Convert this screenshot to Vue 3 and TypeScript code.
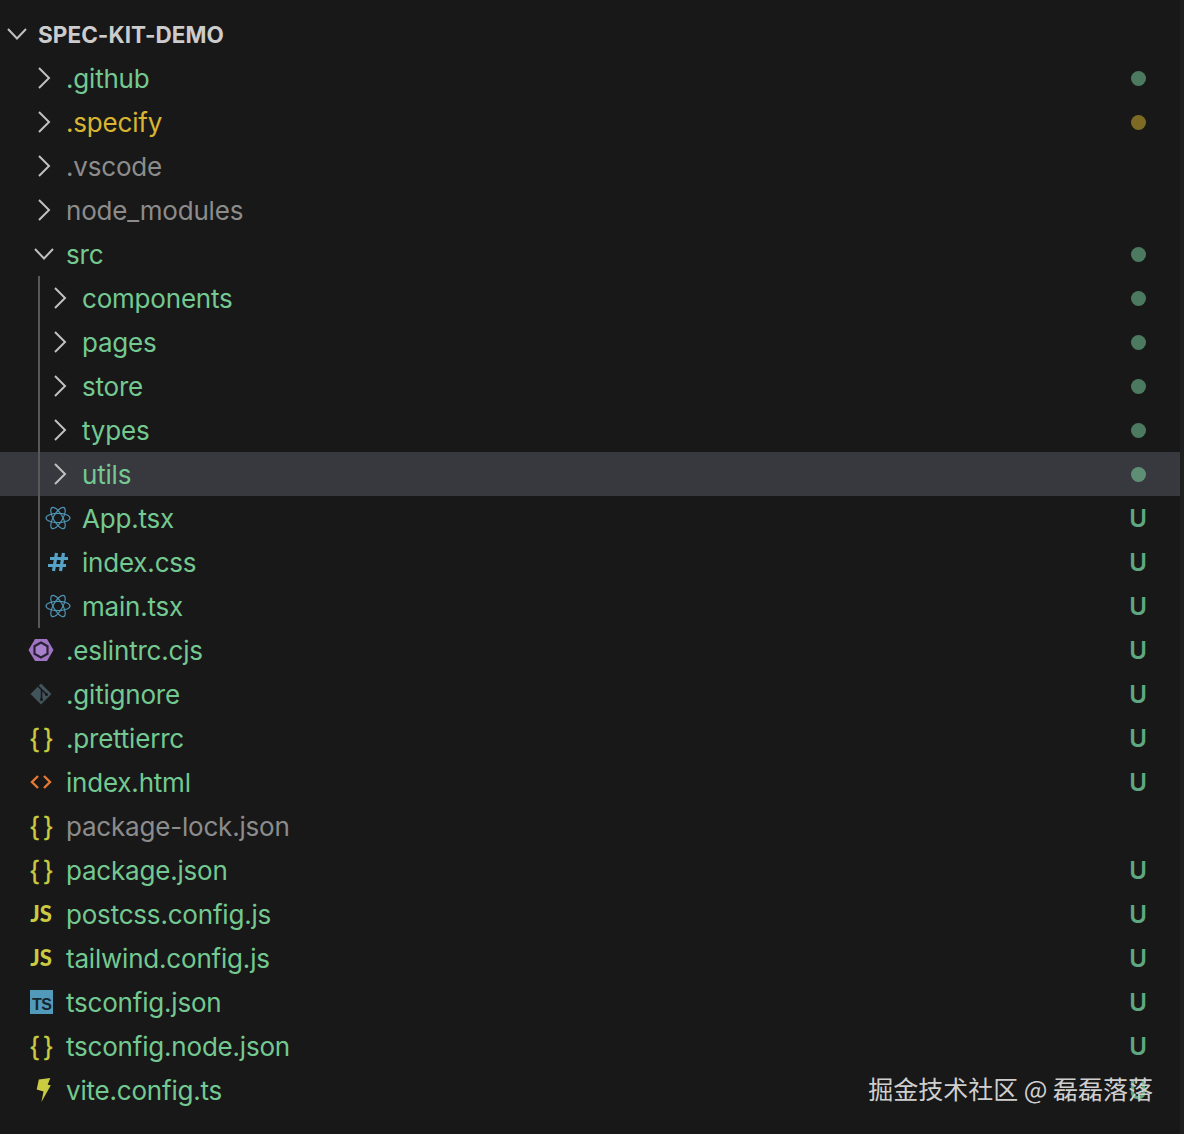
<script setup lang="ts">
type Tone = 'green' | 'yellow' | 'grey'
type Icon = 'closed' | 'open' | 'react' | 'css' | 'eslint' | 'git' | 'braces' | 'html' | 'js' | 'ts' | 'vite'
interface Row {
  name: string
  icon: Icon
  tone: Tone
  badge?: 'dot' | 'U'
  hover?: boolean
}

const before: Row[] = [
  { name: '.github', icon: 'closed', tone: 'green', badge: 'dot' },
  { name: '.specify', icon: 'closed', tone: 'yellow', badge: 'dot' },
  { name: '.vscode', icon: 'closed', tone: 'grey' },
  { name: 'node_modules', icon: 'closed', tone: 'grey' },
  { name: 'src', icon: 'open', tone: 'green', badge: 'dot' },
]
const nested: Row[] = [
  { name: 'components', icon: 'closed', tone: 'green', badge: 'dot' },
  { name: 'pages', icon: 'closed', tone: 'green', badge: 'dot' },
  { name: 'store', icon: 'closed', tone: 'green', badge: 'dot' },
  { name: 'types', icon: 'closed', tone: 'green', badge: 'dot' },
  { name: 'utils', icon: 'closed', tone: 'green', badge: 'dot', hover: true },
  { name: 'App.tsx', icon: 'react', tone: 'green', badge: 'U' },
  { name: 'index.css', icon: 'css', tone: 'green', badge: 'U' },
  { name: 'main.tsx', icon: 'react', tone: 'green', badge: 'U' },
]
const after: Row[] = [
  { name: '.eslintrc.cjs', icon: 'eslint', tone: 'green', badge: 'U' },
  { name: '.gitignore', icon: 'git', tone: 'green', badge: 'U' },
  { name: '.prettierrc', icon: 'braces', tone: 'green', badge: 'U' },
  { name: 'index.html', icon: 'html', tone: 'green', badge: 'U' },
  { name: 'package-lock.json', icon: 'braces', tone: 'grey' },
  { name: 'package.json', icon: 'braces', tone: 'green', badge: 'U' },
  { name: 'postcss.config.js', icon: 'js', tone: 'green', badge: 'U' },
  { name: 'tailwind.config.js', icon: 'js', tone: 'green', badge: 'U' },
  { name: 'tsconfig.json', icon: 'ts', tone: 'green', badge: 'U' },
  { name: 'tsconfig.node.json', icon: 'braces', tone: 'green', badge: 'U' },
  { name: 'vite.config.ts', icon: 'vite', tone: 'green', badge: 'U' },
]
const groups: { rows: Row[]; depth: number; guided: boolean }[] = [
  { rows: before, depth: 1, guided: false },
  { rows: nested, depth: 2, guided: true },
  { rows: after, depth: 1, guided: false },
]
</script>

<template>
  <div class="page">
    <div class="tree">
      <div class="row root">
        <span class="slot">
          <svg width="22" height="14" viewBox="0 0 22 14"><polyline class="chev" points="2,2 11,11.5 20,2" /></svg>
        </span>
        <span class="root-label">SPEC-KIT-DEMO</span>
      </div>

      <div v-for="(g, gi) in groups" :key="gi" class="group" :class="{ guided: g.guided }">
        <div
          v-for="r in g.rows"
          :key="r.name"
          class="row"
          :class="[`depth${g.depth}`, { hover: r.hover }]"
        >
          <span class="slot">
            <svg v-if="r.icon === 'closed'" class="closed" width="14" height="24" viewBox="0 0 14 24"><polyline class="chev" points="2,2 12,12 2,22" /></svg>
            <svg v-else-if="r.icon === 'open'" class="closed" width="22" height="14" viewBox="0 0 22 14"><polyline class="chev" points="2,2 11,11.5 20,2" /></svg>
            <svg v-else-if="r.icon === 'react'" class="ico-left" width="26" height="24" viewBox="0 0 26 24" fill="none" stroke="#4f93b3" stroke-width="1.2">
              <ellipse cx="13" cy="12" rx="12" ry="4.600" />
              <ellipse cx="13" cy="12" rx="12" ry="4.600" transform="rotate(60 13 12)" />
              <ellipse cx="13" cy="12" rx="12" ry="4.600" transform="rotate(120 13 12)" />
            </svg>
            <svg v-else-if="r.icon === 'css'" class="ico-left" width="20" height="20" viewBox="0 0 20 20" fill="none" stroke="#55a3c6" stroke-width="3.2">
              <path d="M8.500 1 5.500 19M15.500 1l-3 18M2 6.500h18M0 13.500h18" />
            </svg>
            <svg v-else-if="r.icon === 'eslint'" class="ico-outer" width="26" height="24" viewBox="0 0 26 24">
              <path d="M7 1h12l6.500 11L19 23H7L.5 12z" fill="#a074c4" />
              <path d="M13 4.500 19.500 8.250v7.500L13 19.500 6.500 15.750v-7.500z" fill="#a880cc" stroke="#2b2335" stroke-width="2.200" />
            </svg>
            <svg v-else-if="r.icon === 'git'" class="ico-outer" width="24" height="24" viewBox="0 0 24 24">
              <path d="M12 1.500 22.500 12 12 22.500 1.500 12z" fill="#41535b" />
              <path d="M9 4l8.500 8.500M12.500 7.500v10" fill="none" stroke="#181818" stroke-width="1.500" />
              <circle cx="17.500" cy="12.500" r="1.500" fill="#181818" />
              <circle cx="12.500" cy="17.500" r="1.500" fill="#181818" />
            </svg>
            <span v-else-if="r.icon === 'braces'" class="braces ico-outer">{ }</span>
            <svg v-else-if="r.icon === 'html'" class="ico-outer" width="22" height="16" viewBox="0 0 22 16" fill="none" stroke="#e37933" stroke-width="2.400">
              <polyline points="8,2 2,8 8,14" />
              <polyline points="14,2 20,8 14,14" />
            </svg>
            <span v-else-if="r.icon === 'js'" class="js ico-outer">JS</span>
            <span v-else-if="r.icon === 'ts'" class="ts ico-outer">TS</span>
            <svg v-else-if="r.icon === 'vite'" width="15" height="24" viewBox="0 0 14 23">
              <path d="M2.500 1.500 13.500 0l-2.500 6.500L14 7 5 23 7 13 .5 11z" fill="#cbcb41" />
            </svg>
          </span>
          <span class="label" :class="r.tone">{{ r.name }}</span>
          <span v-if="r.badge === 'dot'" class="badge"><i class="dot" :class="r.tone" /></span>
          <span v-else-if="r.badge === 'U'" class="badge u">U</span>
        </div>
      </div>
    </div>
    <div class="watermark">掘金技术社区 @ 磊磊落落</div>
  </div>
</template>

<style scoped>
.page {
  position: relative;
  height: 1134px;
  box-sizing: border-box;
  padding: 12px 4px 0 0;
  background: #181818;
  overflow: hidden;
  font-family: Inter, "Noto Sans", sans-serif;
  box-shadow: inset -4px 0 0 #1f1f1f;
}
.group {
  position: relative;
}
.guided::before {
  content: "";
  position: absolute;
  left: 38px;
  top: 0;
  bottom: 0;
  width: 2px;
  background: #585858;
  z-index: 1;
}
.row {
  display: flex;
  align-items: center;
  height: 44px;
  box-sizing: border-box;
  padding-right: 30px;
}
.root {
  padding-left: 2px;
}
.depth1 {
  padding-left: 28px;
}
.depth2 {
  padding-left: 44px;
}
.hover {
  background: #38383f;
}
.slot {
  flex: 0 0 30px;
  width: 30px;
  display: flex;
  align-items: center;
  justify-content: center;
  margin-right: 8px;
}
.root .slot {
  margin-right: 6px;
}
.closed {
  margin-left: 2px;
}
.chev {
  fill: none;
  stroke: #c0c0c0;
  stroke-width: 2;
}
.root-label {
  font-size: 22.500px;
  font-weight: 700;
  color: #cccccc;
  letter-spacing: 0.05px;
}
.label {
  flex: 1;
  font-size: 26px;
  letter-spacing: -0.2px;
  white-space: nowrap;
}
.label.green {
  color: #73c991;
}
.label.yellow {
  color: #d8b531;
}
.label.grey {
  color: #8c8c8c;
}
.badge {
  flex: 0 0 24px;
  display: flex;
  justify-content: center;
}
.dot {
  width: 15px;
  height: 15px;
  border-radius: 50%;
}
.dot.green {
  background: #4b7a60;
}
.dot.yellow {
  background: #7d6a24;
}
.hover .dot.green {
  background: #5e8f75;
}
.u {
  font-size: 24px;
  font-weight: 600;
  color: #5da880;
}
.ico-left {
  margin-right: 3px;
}
.ico-outer {
  margin-right: 4px;
}
.braces {
  font-family: "Liberation Sans", sans-serif;
  font-size: 25px;
  letter-spacing: -0.800px;
  color: #cbcb41;
  line-height: 1;
  white-space: pre;
  -webkit-text-stroke: 0.4px #cbcb41;
}
.js {
  font-family: Lato, sans-serif;
  font-weight: 900;
  font-size: 22px;
  color: #cbcb41;
  line-height: 1;
}
.ts {
  width: 23px;
  height: 24px;
  box-sizing: border-box;
  background: #519aba;
  color: #16252e;
  font-family: "Liberation Sans", sans-serif;
  font-size: 16px;
  font-weight: 700;
  letter-spacing: -0.5px;
  line-height: 1;
  display: flex;
  align-items: flex-end;
  justify-content: flex-end;
  padding: 0 1px 1px 0;
}
.watermark {
  position: absolute;
  right: 31px;
  top: 1070px;
  font-family: "Noto Sans CJK SC", sans-serif;
  font-size: 25px;
  line-height: 36px;
  color: #cfcfcf;
  white-space: nowrap;
}
</style>
<style>
html,
body {
  margin: 0;
  background: #181818;
}
</style>
